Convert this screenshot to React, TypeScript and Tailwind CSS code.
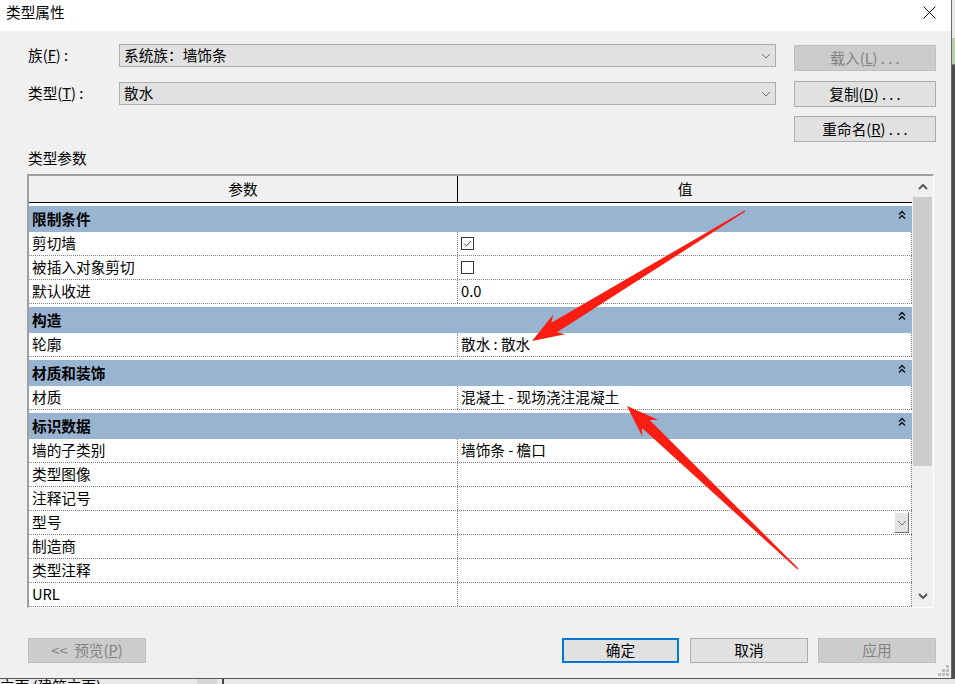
import React from 'react';

type Cell =
  | { kind: 'text'; text: string }
  | { kind: 'check'; checked: boolean }
  | { kind: 'drop' }
  | { kind: 'empty' };

interface Group {
  title: string;
  rows: { label: string; value: Cell }[];
}

const GROUPS: Group[] = [
  {
    title: '限制条件',
    rows: [
      { label: '剪切墙', value: { kind: 'check', checked: true } },
      { label: '被插入对象剪切', value: { kind: 'check', checked: false } },
      { label: '默认收进', value: { kind: 'text', text: '0.0' } },
    ],
  },
  {
    title: '构造',
    rows: [{ label: '轮廓', value: { kind: 'text', text: '散水 : 散水' } }],
  },
  {
    title: '材质和装饰',
    rows: [{ label: '材质', value: { kind: 'text', text: '混凝土 - 现场浇注混凝土' } }],
  },
  {
    title: '标识数据',
    rows: [
      { label: '墙的子类别', value: { kind: 'text', text: '墙饰条 - 檐口' } },
      { label: '类型图像', value: { kind: 'empty' } },
      { label: '注释记号', value: { kind: 'empty' } },
      { label: '型号', value: { kind: 'drop' } },
      { label: '制造商', value: { kind: 'empty' } },
      { label: '类型注释', value: { kind: 'empty' } },
      { label: 'URL', value: { kind: 'empty' } },
    ],
  },
];

function Chevron({ up = false, bold = false }: { up?: boolean; bold?: boolean }) {
  return (
    <svg width="10" height="6" viewBox="0 0 10 6" className="block">
      <path
        d={up ? 'M1 5 L5 1 L9 5' : 'M1 1 L5 5 L9 1'}
        fill="none"
        stroke={bold ? '#5a5a5a' : '#707070'}
        strokeWidth={bold ? 2 : 1}
      />
    </svg>
  );
}

function Btn({
  children,
  w,
  h,
  disabled,
  primary,
}: {
  children: React.ReactNode;
  w: string;
  h: string;
  disabled?: boolean;
  primary?: boolean;
}) {
  const base = 'flex items-center justify-center leading-none shrink-0';
  const look = disabled
    ? 'bg-[#cccccc] border border-[#bfbfbf] text-[#838383]'
    : primary
    ? 'bg-[#e1e1e1] border-2 border-[#0078d7] text-black'
    : 'bg-[#e1e1e1] border border-[#adadad] text-black';
  return <div className={`${base} ${look} ${w} ${h}`}>{children}</div>;
}

function Select({ text, cls }: { text: string; cls: string }) {
  return (
    <div
      className={`w-[657px] h-[23px] border border-[#adadad] bg-[#e1e1e1] flex items-center justify-between pl-[4px] pr-[4px] leading-none ${cls}`}
    >
      <span>{text}</span>
      <Chevron />
    </div>
  );
}

function ValueCell({ v }: { v: Cell }) {
  if (v.kind === 'text') return <span className="leading-none">{v.text}</span>;
  if (v.kind === 'check')
    return (
      <div className="w-[13px] h-[13px] border border-[#333] bg-white">
        {v.checked && (
          <svg width="11" height="11" viewBox="0 0 11 11" className="block">
            <path d="M2 5.5 L4.5 8 L9 3" fill="none" stroke="#555" strokeWidth="1" />
          </svg>
        )}
      </div>
    );
  if (v.kind === 'drop')
    return (
      <div className="ml-auto mr-[2px] w-[15px] h-[21px] bg-[#e3e3e3] border border-[#f8f8f8] border-r-[#707070] border-b-[#707070] flex items-center justify-center">
        <Chevron />
      </div>
    );
  return null;
}

function arrowPoints(x1: number, y1: number, x2: number, y2: number) {
  const dx = x2 - x1;
  const dy = y2 - y1;
  const len = Math.hypot(dx, dy);
  const ux = dx / len;
  const uy = dy / len;
  const px = -uy;
  const py = ux;
  const at = (d: number, w: number) => `${x1 + ux * d + px * w},${y1 + uy * d + py * w}`;
  const head = 32;
  return [
    at(0, 0.7),
    at(len - head + 6, 5.5),
    at(len - head, 11.5),
    `${x2},${y2}`,
    at(len - head, -11.5),
    at(len - head + 6, -5.5),
    at(0, -0.7),
  ].join(' ');
}

export default function App() {
  return (
    <div className="relative w-[955px] h-[684px] overflow-hidden bg-[#e6e6e6] text-[14.67px] text-black font-['Noto_Sans_CJK_SC','Noto_Sans',sans-serif]">
      <div className="flex h-[678px]">
        <div className="w-[951px] h-[678px] flex flex-col">
          {/* title bar */}
          <div className="h-[31px] bg-white flex justify-between items-start shrink-0">
            <span className="pl-[6px] pt-[4px] leading-[16px]">类型属性</span>
            <svg width="13" height="13" viewBox="0 0 13 13" className="mt-[6px] mr-[15px]">
              <path d="M0.5 0.5 L12.5 12.5 M12.5 0.5 L0.5 12.5" stroke="#111" strokeWidth="1" />
            </svg>
          </div>

          <div className="flex-1 bg-[#f0f0f0] flex flex-col pl-[28px] pr-[15px]">
            <div className="mt-[13px] flex items-start h-[27px]">
              <div className="w-[91px] h-[23px] flex items-center leading-none">
                族(<span className="underline">F</span>)&nbsp;:
              </div>
              <Select text="系统族：墙饰条" cls="" />
              <div className="ml-[18px] mt-[1px]">
                <Btn w="w-[142px]" h="h-[26px]" disabled>
                  载入(<span className="underline">L</span>)&nbsp;.&nbsp;.&nbsp;.
                </Btn>
              </div>
            </div>

            <div className="mt-[10px] flex items-start h-[26px]">
              <div className="w-[91px] h-[23px] mt-[1px] flex items-center leading-none">
                类型(<span className="underline">T</span>)&nbsp;:
              </div>
              <Select text="散水" cls="mt-[1px]" />
              <div className="ml-[18px]">
                <Btn w="w-[142px]" h="h-[26px]">
                  复制(<span className="underline">D</span>)&nbsp;.&nbsp;.&nbsp;.
                </Btn>
              </div>
            </div>

            <div className="mt-[9px] flex justify-end h-[26px]">
              <Btn w="w-[142px]" h="h-[26px]">
                重命名(<span className="underline">R</span>)&nbsp;.&nbsp;.&nbsp;.
              </Btn>
            </div>

            <div className="mt-[8px] h-[16px] leading-[16px]">类型参数</div>

            {/* parameter grid */}
            <div className="mt-[8px] -ml-[1px] w-[907px] h-[434px] flex border-l-2 border-t-2 border-[#a0a0a0] border-r border-b border-r-white border-b-white bg-[#f0f0f0]">
              <div className="w-[883px] flex flex-col bg-white">
                <div className="h-[27px] flex border-b border-black bg-[#f0f0f0] shrink-0">
                  <div className="w-[429px] border-r border-black flex items-center justify-center leading-none">
                    参数
                  </div>
                  <div className="flex-1 flex items-center justify-center leading-none">值</div>
                </div>
                {GROUPS.map((g) => (
                  <React.Fragment key={g.title}>
                    <div className="h-[29px] pt-[3px] bg-white shrink-0">
                      <div className="h-[26px] bg-[#99b4d1] flex justify-between pl-[3px] pr-[6px]">
                        <span className="self-center font-bold leading-none">{g.title}</span>
                        <svg width="8" height="10" viewBox="0 0 8 10" className="mt-[4px]">
                          <path
                            d="M1 4.5 L4 1.5 L7 4.5 M1 8.5 L4 5.5 L7 8.5"
                            fill="none"
                            stroke="#111"
                            strokeWidth="1.4"
                          />
                        </svg>
                      </div>
                    </div>
                    {g.rows.map((r) => (
                      <div
                        key={r.label}
                        className="h-[24px] flex border-b border-dotted border-[#808080] shrink-0"
                      >
                        <div className="w-[429px] border-r border-dotted border-[#808080] pl-[3px] flex items-center leading-none">
                          {r.label}
                        </div>
                        <div className="flex-1 border-r border-dotted border-[#808080] pl-[3px] flex items-center">
                          <ValueCell v={r.value} />
                        </div>
                      </div>
                    ))}
                  </React.Fragment>
                ))}
              </div>
              <div className="ml-[1px] w-[19px] flex flex-col">
                <div className="h-[21px] flex items-center justify-center">
                  <Chevron up bold />
                </div>
                <div className="h-[269px] bg-[#cdcdcd]" />
                <div className="flex-1" />
                <div className="h-[22px] flex items-center justify-center">
                  <Chevron bold />
                </div>
              </div>
            </div>

            <div className="mt-[30px] flex h-[25px] items-start">
              <Btn w="w-[118px]" h="h-[25px]" disabled>
                &lt;&lt;&nbsp;&nbsp;预览(<span className="underline">P</span>)
              </Btn>
              <div className="ml-auto flex">
                <Btn w="w-[117px]" h="h-[25px]" primary>
                  确定
                </Btn>
                <div className="ml-[11px]">
                  <Btn w="w-[118px]" h="h-[25px]">
                    取消
                  </Btn>
                </div>
                <div className="ml-[10px]">
                  <Btn w="w-[118px]" h="h-[25px]" disabled>
                    应用
                  </Btn>
                </div>
              </div>
            </div>

            <div className="mt-[2px] h-[12px] flex justify-end -mr-[13px]">
              <svg width="11" height="11" viewBox="0 0 11 11">
                <g fill="#bcbcbc">
                  <rect x="8" y="0" width="3" height="3" />
                  <rect x="4" y="4" width="3" height="3" />
                  <rect x="8" y="4" width="3" height="3" />
                  <rect x="0" y="8" width="3" height="3" />
                  <rect x="4" y="8" width="3" height="3" />
                  <rect x="8" y="8" width="3" height="3" />
                </g>
              </svg>
            </div>
          </div>
        </div>

        {/* edge of the window behind */}
        <div className="w-[4px] flex flex-col border-l border-[#6a6a6a]">
          <div className="h-[38px] bg-[#e8e8e8]" />
          <div className="h-[27px] bg-[#b8cfaa] border-b border-[#6c8c5c]" />
          <div className="flex-1 bg-[#4c4c4c]" />
        </div>
      </div>

      <div className="h-[6px] flex border-t border-[#555] bg-[#e9e9e9] overflow-hidden">
        <div className="w-[197px] leading-[16px] -mt-[1px] whitespace-nowrap">立面 (建筑立面)</div>
        <div className="w-[20px] bg-[#d6d6d6]" />
        <div className="w-[5px]" />
        <div className="w-[2px] bg-[#444]" />
        <div className="flex-1" />
      </div>

      {/* red annotation arrows */}
      <svg className="absolute left-0 top-0 pointer-events-none" width="955" height="684">
        <polygon points={arrowPoints(745, 211, 532, 341)} fill="#fb1d12" />
        <polygon points={arrowPoints(798, 569, 627, 406)} fill="#fb1d12" />
      </svg>
    </div>
  );
}
